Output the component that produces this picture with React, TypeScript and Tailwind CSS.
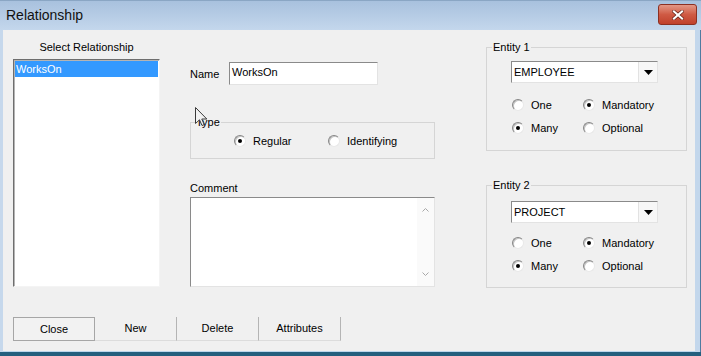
import React from "react";

const Radio = ({ checked }: { checked?: boolean }) => (
  <span className="flex h-[12px] w-[12px] shrink-0 items-center justify-center rounded-full border border-t-[#858585] border-l-[#858585] border-r-[#e8e8e8] border-b-[#e8e8e8] bg-white shadow-[inset_1px_1px_0_#c4c4c4]">
    {checked && <span className="h-[4px] w-[4px] rounded-full bg-black" />}
  </span>
);

const RadioItem = ({
  checked,
  label,
  className,
}: {
  checked?: boolean;
  label: string;
  className?: string;
}) => (
  <div className={"flex h-[14px] items-center gap-[7px] " + (className ?? "")}>
    <Radio checked={checked} />
    <span className="leading-[14px]">{label}</span>
  </div>
);

const Combo = ({ value }: { value: string }) => (
  <div className="flex h-[22px] w-[147px] border border-t-[#8a8a8a] border-l-[#8a8a8a] border-r-[#e3e3e3] border-b-[#e3e3e3] bg-white">
    <div className="flex flex-1 items-center pl-[2px] leading-[14px]">{value}</div>
    <div className="flex w-[19px] items-center justify-center border-l border-[#e2e2e2] bg-[#f7f7f7]">
      <svg width="9" height="5" viewBox="0 0 9 5">
        <path d="M0 0 H9 L4.5 5 Z" fill="#000" />
      </svg>
    </div>
  </div>
);

const Entity = ({
  title,
  value,
  height,
  padTop,
  row1Top,
}: {
  title: string;
  value: string;
  height: string;
  padTop: string;
  row1Top: string;
}) => (
  <fieldset className={"w-[201px] border border-[#d5d5d5] " + height}>
    <legend className="ml-[5px] px-[1px] leading-[13px]">{title}</legend>
    <div className={"pl-[24px] " + padTop}>
      <Combo value={value} />
      <div className={"flex pl-[1px] " + row1Top}>
        <RadioItem label="One" className="w-[71px]" />
        <RadioItem label="Mandatory" checked />
      </div>
      <div className="mt-[9px] flex pl-[1px]">
        <RadioItem label="Many" checked className="w-[71px]" />
        <RadioItem label="Optional" />
      </div>
    </div>
  </fieldset>
);

export default function App() {
  return (
    <div className="relative flex h-[356px] w-[701px] flex-col bg-[#f0f0f0] font-['Liberation_Sans',Arial,sans-serif] text-[11px] text-black">
      {/* Title bar */}
      <div className="flex h-[30px] shrink-0 items-start border-t border-[#8aa6c4] bg-gradient-to-b from-[#a8c1de] to-[#c4d7ec]">
        <div className="mt-[5px] pl-[6px] text-[14px] leading-[18px] text-[#111]">Relationship</div>
        <div className="ml-auto mr-[4px] mt-[3px] flex h-[21px] w-[39px] items-center justify-center rounded-[3px] border border-[#8c3022] bg-gradient-to-b from-[#e29786] via-[#cf5a44] to-[#c0402b]">
          <svg width="12" height="10" viewBox="0 0 12 10">
            <path d="M2 1.5 L10 8.5 M10 1.5 L2 8.5" stroke="#5a1a10" strokeWidth="3.4" strokeLinecap="square" />
            <path d="M2 1.5 L10 8.5 M10 1.5 L2 8.5" stroke="#fff" strokeWidth="2.2" strokeLinecap="square" />
          </svg>
        </div>
      </div>

      {/* Frame + body */}
      <div className="flex flex-1 border-b-[4px] border-[#245f7e]">
        <div className="w-[3px] shrink-0 bg-[#c6d8ec]" />
        <div className="flex flex-1 flex-col border-b border-[#bcd6ec] pl-[10px]">
          <div className="flex h-[257px] items-start">
            {/* Left column */}
            <div className="flex w-[147px] flex-col">
              <div className="mt-[10px] text-center leading-[14px]">Select Relationship</div>
              <div className="mt-[5px] h-[228px] border border-t-[#6e6e6e] border-l-[#6e6e6e] border-r-[#f4f4f4] border-b-[#f4f4f4] bg-white shadow-[inset_1px_1px_0_#b4b4b4]">
                <div className="ml-[1px] mr-[1px] mt-[1px] h-[16px] bg-[#3399ff] pl-[1px] leading-[16px] text-white">
                  WorksOn
                </div>
              </div>
            </div>

            {/* Middle column */}
            <div className="ml-[30px] flex w-[245px] flex-col">
              <div className="mt-[32px] flex h-[23px] items-center">
                <span className="mt-[1px] w-[39px] leading-[14px]">Name</span>
                <div className="flex h-[23px] w-[149px] items-start border border-t-[#8a8a8a] border-l-[#8a8a8a] border-r-[#e3e3e3] border-b-[#e3e3e3] bg-white pl-[2px] pt-[2px] leading-[14px]">
                  WorksOn
                </div>
              </div>
              <fieldset className="mt-[31px] h-[43px] w-[245px] border border-[#d5d5d5]">
                <legend className="ml-[4px] px-[1px] leading-[13px]">Type</legend>
                <div className="flex pl-[43px] pt-[5px]">
                  <RadioItem label="Regular" checked className="w-[94px]" />
                  <RadioItem label="Identifying" />
                </div>
              </fieldset>
              <div className="mt-[22px] leading-[14px]">Comment</div>
              <div className="mt-[2px] flex h-[90px] border border-t-[#8a8a8a] border-l-[#8a8a8a] border-r-[#e3e3e3] border-b-[#e3e3e3] bg-white">
                <div className="flex-1" />
                <div className="flex w-[17px] flex-col items-center justify-between bg-[#fafafa] py-[10px]">
                  <svg width="7" height="4" viewBox="0 0 7 4">
                    <path d="M0.5 3.5 L3.5 0.5 L6.5 3.5" stroke="#a8a8a8" fill="none" />
                  </svg>
                  <svg width="7" height="4" viewBox="0 0 7 4">
                    <path d="M0.5 0.5 L3.5 3.5 L6.5 0.5" stroke="#a8a8a8" fill="none" />
                  </svg>
                </div>
              </div>
            </div>

            {/* Right column */}
            <div className="ml-[51px] flex flex-col">
              <div className="mt-[11px]">
                <Entity title="Entity 1" value="EMPLOYEE" height="h-[110px]" padTop="pt-[7px]" row1Top="mt-[15px]" />
              </div>
              <div className="mt-[28px]">
                <Entity title="Entity 2" value="PROJECT" height="h-[109px]" padTop="pt-[9px]" row1Top="mt-[13px]" />
              </div>
            </div>
          </div>

          {/* Buttons */}
          <div className="mt-[30px] flex h-[24px]">
            <div className="flex w-[82px] items-center justify-center border border-[#a6a6a6] bg-[#f2f2f2]">Close</div>
            <div className="flex w-[82px] items-center justify-center border-b border-r border-b-[#dcdcdc] border-r-[#b4b4b4]">New</div>
            <div className="flex w-[82px] items-center justify-center border-b border-r border-b-[#dcdcdc] border-r-[#b4b4b4]">Delete</div>
            <div className="flex w-[82px] items-center justify-center border-b border-r border-b-[#dcdcdc] border-r-[#b4b4b4]">Attributes</div>
          </div>
        </div>
        <div className="w-[6px] shrink-0 border-r border-[#4f7ba0] bg-[#c3d7ec]" />
      </div>

      {/* Mouse cursor overlay */}
      <svg className="absolute left-[195px] top-[107px]" width="13" height="20" viewBox="0 0 13 20">
        <path d="M0.5 0.5 L0.5 16.5 L4.5 12.8 L7 18.5 L9.2 17.6 L6.8 12 L11.8 12 Z" fill="#f2f2f2" stroke="#3a3a3a" strokeWidth="1" strokeLinejoin="miter" />
      </svg>
    </div>
  );
}
